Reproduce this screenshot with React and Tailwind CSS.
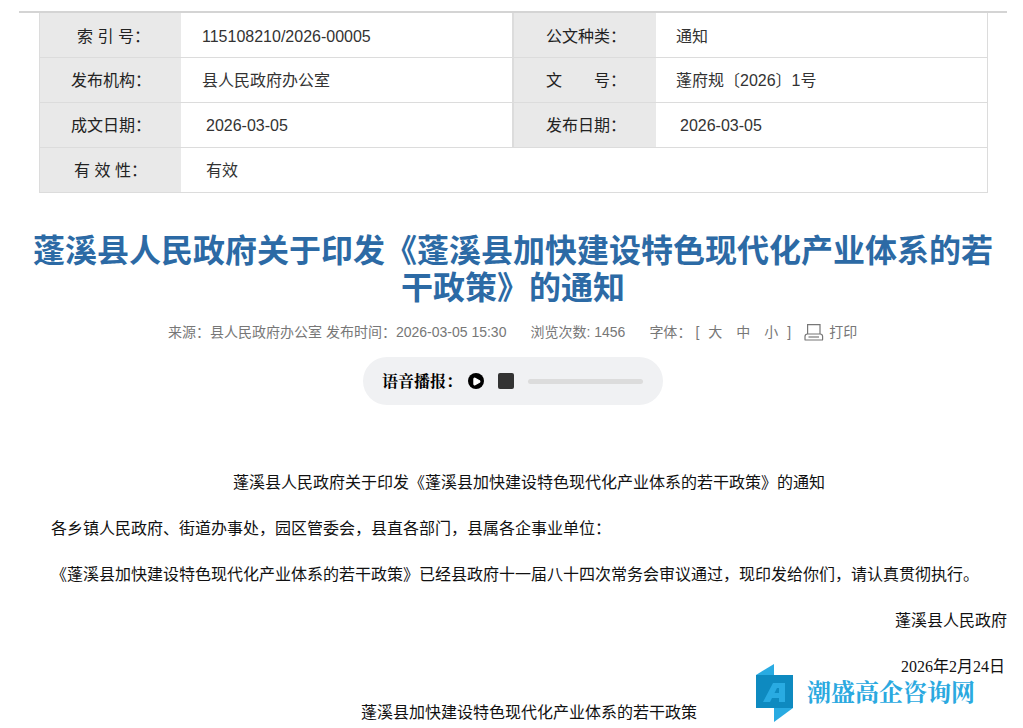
import { Play } from 'lucide-react';

const cjkSans = "font-['Liberation_Sans','Noto_Sans_CJK_SC',sans-serif]";
const cjkSerif = "font-['Liberation_Serif','Noto_Serif_CJK_SC','Noto_Sans_CJK_SC',serif]";

// full-width punctuation
const COLON = '\uFF1A';
const COMMA = '\uFF0C';

function Row({ label, value, labelPad, right, last, pad = 'pl-[21px]', top = 'pt-[2px]' }) {
  return (
    <div className={`flex ${last ? 'h-[44px]' : 'h-[45px] border-b border-[#dcdcdc]'}`}>
      <div className={`flex w-[141px] shrink-0 items-center whitespace-pre bg-[#e9e9e9] text-[16px] text-[#222] ${top} ${labelPad}`}>{label}</div>
      <div className={`flex flex-1 items-center text-[16px] text-[#333] ${top} ${pad}`}>{value}</div>
      {right}
    </div>
  );
}

function RightCell({ label, value, pad = 'pl-[20px]', top = 'pt-[2px]' }) {
  return (
    <div className="flex w-[475px] shrink-0 border-l-2 border-[#dcdcdc]">
      <div className={`flex w-[142px] shrink-0 items-center bg-[#e9e9e9] pl-[32px] text-[16px] text-[#222] ${top}`}>{label}</div>
      <div className={`flex flex-1 items-center text-[16px] text-[#333] ${top} ${pad}`}>{value}</div>
    </div>
  );
}

function PrintIcon() {
  return (
    <svg width="20" height="18" viewBox="0 0 20 18" fill="none" stroke="#777" strokeWidth="1.2">
      <path d="M3.6 11 V1.6 H16 V11" />
      <path d="M1 16.4 V13.4 Q1 11 3.6 11 H16 Q18.6 11 18.6 13.4 V16.4 Q18.6 17 18 17 H1.6 Q1 17 1 16.4 Z" />
      <path d="M4.5 14 H15" />
    </svg>
  );
}

function Logo() {
  return (
    <svg width="38" height="58" viewBox="0 0 38 58">
      <path d="M1 11 L19 0 V11 Z" fill="#29abe2" />
      <path d="M19 44 H38 L19 58 Z" fill="#29abe2" />
      <rect x="1" y="11" width="37" height="33" fill="#0e8ac0" />
      <path d="M8 38 L18 19 H30 V38 H24 V34 H17 L15 38 Z M19.5 29 H24 V24 H22 Z" fill="#29abe2" fillRule="evenodd" />
    </svg>
  );
}

const Digits = ({ children }) => <span className="font-['Liberation_Serif',serif]">{children}</span>;

export default function App() {
  return (
    <div className={`relative h-[728px] w-[1023px] overflow-hidden bg-white ${cjkSans}`}>
      <div className="ml-[19px] mr-[16px] mt-[11px] h-[2px] bg-[#d4d4d4]" />

      <div className="ml-[39px] w-[949px] border-x border-b border-[#dcdcdc]">
        <Row label={`索 引 号${COLON}`} labelPad="pl-[37px]" top="pt-[4px]" value="115108210/2026-00005" right={<RightCell label={`公文种类${COLON}`} value="通知" top="pt-[4px]" />} />
        <Row label={`发布机构${COLON}`} labelPad="pl-[31px]" value="县人民政府办公室" right={<RightCell label={<>文<span className="ml-[32px]">号{COLON}</span></>} value="蓬府规〔2026〕1号" />} />
        <Row label={`成文日期${COLON}`} labelPad="pl-[31px]" value="2026-03-05" pad="pl-[25px]" right={<RightCell label={`发布日期${COLON}`} value="2026-03-05" pad="pl-[24px]" />} />
        <Row label={`有 效 性${COLON}`} labelPad="pl-[34px]" value="有效" pad="pl-[25px]" last />
      </div>

      <h1 className="ml-[32px] mr-[29px] mt-[40px] text-center text-[32px] leading-[37px] font-bold text-[#2c6aa5]">
        蓬溪县人民政府关于印发《蓬溪县加快建设特色现代化产业体系的若干政策》的通知
      </h1>

      <div className="mt-[15px] flex h-[20px] items-center whitespace-pre pl-[168px] text-[14px] text-[#777]">
        <span>{`来源${COLON}县人民政府办公室 发布时间${COLON}2026-03-05 15:30`}</span>
        <span className="ml-[24px]">浏览次数: 1456</span>
        <span className="ml-[24px]">字体{COLON}</span>
        <span className="ml-[4px]">[</span>
        <span className="ml-[9px]">大</span>
        <span className="ml-[14px]">中</span>
        <span className="ml-[14px]">小</span>
        <span className="ml-[9px]">]</span>
        <span className="ml-[13px]"><PrintIcon /></span>
        <span className="ml-[5px]">打印</span>
      </div>

      <div className="ml-[363px] mt-[15px] flex h-[48px] w-[300px] items-center rounded-[24px] bg-[#f0f1f3] pl-[20px]">
        <span className={`${cjkSerif} -ml-[1px] w-[81px] pt-[2px] text-[16px] font-bold text-black`}>语音播报{COLON}</span>
        <span className="ml-[5px] flex size-[16px] items-center justify-center rounded-full bg-black">
          <Play size={9} fill="#fff" stroke="#fff" strokeWidth={3} />
        </span>
        <span className="ml-[14px] size-[16px] rounded-[2px] bg-[#333]" />
        <span className="ml-[14px] h-[5px] w-[115px] rounded-full bg-[#dcdcdc]" />
      </div>

      <div className="text-[16px] text-[#111]">
        <p className="mt-[67px] pl-[35px] text-center leading-[22px]">蓬溪县人民政府关于印发《蓬溪县加快建设特色现代化产业体系的若干政策》的通知</p>
        <p className="ml-[51px] mt-[24px] leading-[22px]">{`各乡镇人民政府、街道办事处${COMMA}园区管委会${COMMA}县直各部门${COMMA}县属各企事业单位${COLON}`}</p>
        <p className="ml-[51px] mt-[24px] leading-[22px]">{`《蓬溪县加快建设特色现代化产业体系的若干政策》已经县政府十一届八十四次常务会审议通过${COMMA}现印发给你们${COMMA}请认真贯彻执行。`}</p>
        <p className="mr-[16px] mt-[24px] text-right leading-[22px]">蓬溪县人民政府</p>
        <p className="mr-[18px] mt-[24px] text-right leading-[22px]">
          <Digits>2026</Digits>年<Digits>2</Digits>月<Digits>24</Digits>日
        </p>
        <p className="ml-[361px] mt-[24px] leading-[22px]">蓬溪县加快建设特色现代化产业体系的若干政策</p>
      </div>

      <div className="absolute left-[755px] top-[664px] flex items-center">
        <Logo />
        <span className={`ml-[14px] ${cjkSerif} text-[24px] leading-[30px] font-bold text-[#2ba9e0]`}>潮盛高企咨询网</span>
      </div>
    </div>
  );
}
